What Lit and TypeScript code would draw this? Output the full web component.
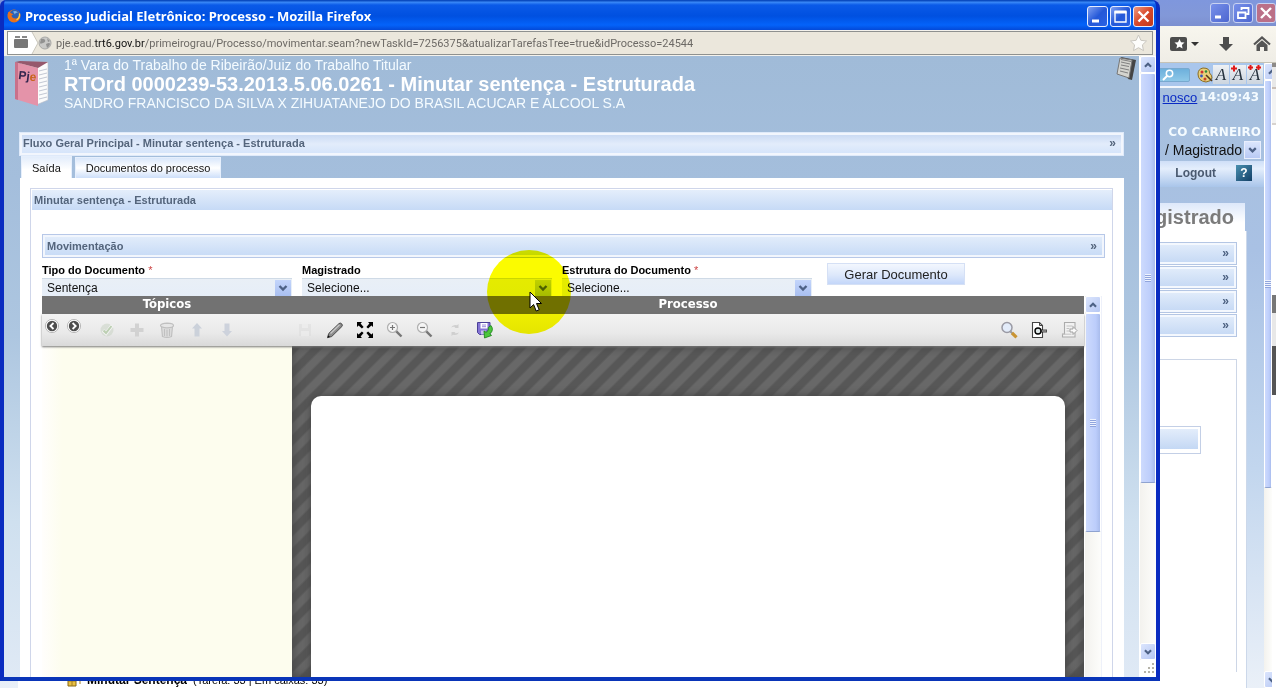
import { LitElement, html, css, svg, TemplateResult } from "lit";
import { customElement, property } from "lit/decorators.js";

const chevron = (dir: "up" | "down") => svg`
  <svg viewBox="0 0 16 16" width="16" height="16" aria-hidden="true">
    <path d=${dir === "down" ? "M4.5 6 L8 9.5 L11.5 6" : "M4.5 10 L8 6.5 L11.5 10"}
      fill="none" stroke="#4d6185" stroke-width="2.4" />
  </svg>`;

@customElement("xp-scrollbar")
class XpScrollbar extends LitElement {
  @property({ type: Boolean }) down = false;
  static styles = css`
    :host { display: flex; flex-direction: column; width: 16px; background: linear-gradient(90deg, #f3f2ee, #fdfdfb); overflow: hidden; }
    button { flex: none; width: 16px; height: 17px; padding: 0; border: 1px solid #fff; border-radius: 2px;
      background: linear-gradient(135deg, #dbe5fd, #b6c7f3); display: flex; align-items: center; justify-content: center; }
    .thumb { flex: none; height: var(--thumb, 50%); box-sizing: border-box; border: 1px solid #fff; border-bottom-color: #8fa3d0;
      border-radius: 2px; background: linear-gradient(90deg, #cddafd, #bccdfb 70%, #a9bcec);
      display: flex; align-items: center; justify-content: center; }
    .grip { width: 6px; height: 8px; background: repeating-linear-gradient(#eef3ff 0 1px, #91a5dd 1px 2px); }
    .gap { flex: 1; }
  `;
  render() {
    return html`
      <button aria-label="Rolar para cima">${chevron("up")}</button>
      <div class="thumb"><div class="grip"></div></div>
      <div class="gap"></div>
      ${this.down ? html`<button aria-label="Rolar para baixo">${chevron("down")}</button>` : ""}
    `;
  }
}

const icons: Record<string, TemplateResult> = {
  prev: svg`<circle cx="8" cy="7" r="6.6" fill="#fff" stroke="#aaa" stroke-width=".8"/><circle cx="8" cy="7" r="5.2" fill="#4e4e4e"/><path d="M9.5 4 L6.4 7 L9.5 10" fill="none" stroke="#fff" stroke-width="1.8"/>`,
  next: svg`<circle cx="8" cy="7" r="6.6" fill="#fff" stroke="#aaa" stroke-width=".8"/><circle cx="8" cy="7" r="5.2" fill="#4e4e4e"/><path d="M6.6 4 L9.7 7 L6.6 10" fill="none" stroke="#fff" stroke-width="1.8"/>`,
  check: svg`<g opacity=".45"><circle cx="9" cy="9" r="6.5" fill="#c3cfbd"/><path d="M5 9.5 L8 12.5 L14 4.5" fill="none" stroke="#fff" stroke-width="3.4"/><path d="M5.5 9.5 L8 12 L13.5 5" fill="none" stroke="#86b070" stroke-width="2"/></g>`,
  plus: svg`<path d="M7 2.5h4V7h4.5v4H11v4.5H7V11H2.5V7H7z" fill="#d2d2d2"/>`,
  trash: svg`<g fill="none" stroke="#c0c0c0" stroke-width="1.2"><path d="M3.5 5.5 L4.5 15.5 Q9 17.5 13.5 15.5 L14.5 5.5" fill="#dedede"/><ellipse cx="9" cy="4.5" rx="6.5" ry="2.3" fill="#e6e6e6"/><path d="M6.5 8v7M9 8.5v7M11.5 8v7M7 2.5h4"/></g>`,
  up: svg`<path d="M9 2 L14 7.5 H11.5 V15.5 H6.5 V7.5 H4 Z" fill="#cbd1da"/>`,
  down: svg`<path d="M6.5 2.5h5V10H14L9 15.5 4 10h2.5z" fill="#cdd2dc"/>`,
  save: svg`<g fill="#d9d9d9" opacity=".7"><path d="M3 3h12v12H3z" opacity=".6"/><path d="M6 3h6v4H6zM5 10h8v5H5z" fill="#ececec"/></g>`,
  pencil: svg`<path d="M1.5 16.7 L2.7 12.5 L13 2.6 Q14.2 1.4 15.7 2.8 Q17 4.2 15.9 5.5 L5.7 15.5 Z" fill="#8d8d8d" stroke="#4a4a4a" stroke-width="1"/><path d="M4.5 12.5 L13.5 3.8" stroke="#c8c8c8" stroke-width="1.4"/><path d="M1.5 16.7l.8-2.5 1.6 1.6z" fill="#111"/>`,
  expand: svg`<g fill="#000"><path d="M1 1h5L4.6 2.6 7.6 5.9 5.9 7.6 2.6 4.6 1 6zM17 1v5l-1.6-1.4-3.3 3-1.7-1.7 3-3.3L12 1zM1 17v-5l1.6 1.4 3.3-3 1.7 1.7-3 3.3L6 17zM17 17h-5l1.4-1.6-3-3.3 1.7-1.7 3.3 3L17 12z"/></g>`,
  zoomIn: svg`<circle cx="6.5" cy="6.5" r="5" fill="#f5f5f5" stroke="#b0b0b0" stroke-width="1.2"/><path d="M4 6.5h5M6.5 4v5" stroke="#777" stroke-width="1.2"/><path d="M10.3 10.3 L15.5 15.5" stroke="#777" stroke-width="2.4"/>`,
  zoomOut: svg`<circle cx="6.5" cy="6.5" r="5" fill="#f5f5f5" stroke="#b0b0b0" stroke-width="1.2"/><path d="M4 6.5h5" stroke="#777" stroke-width="1.2"/><path d="M10.3 10.3 L15.5 15.5" stroke="#777" stroke-width="2.4"/>`,
  refresh: svg`<g fill="#cfcfcf"><path d="M5 6.5 Q7 3 11 4.2 L12.5 3 V7 H8.5 L9.5 6 Q7.5 5.2 5 6.5zM13 11.5 Q11 15 7 13.8 L5.5 15 V11 H9.5 L8.5 12 Q10.5 12.8 13 11.5z"/></g>`,
  saveGo: svg`<path d="M1.5 1.5h12.5v12H3.5l-2-2z" fill="#8474d4" stroke="#4a3f98"/><path d="M4.5 2h7v5.5h-7z" fill="#fff"/><path d="M6 4h4M6 5.7h4" stroke="#7d6bd0" stroke-width=".8"/><path d="M5 9.5h5v4H5z" fill="#c9c2ef"/><path d="M15 4.5 Q18.3 9 14 12.7 L15.5 14.5 L8.5 17 L8 10 L10.3 11.3 Q13.3 9 12.3 6.5 Z" fill="#4cc63c" stroke="#167f14" stroke-width=".8"/>`,
  search: svg`<circle cx="7" cy="6.5" r="5" fill="#e3ecfa" stroke="#9a9aa4" stroke-width="1.5"/><path d="M10.5 10.5 L12.5 12.5" stroke="#999" stroke-width="2"/><path d="M12 12 L16.5 16.3" stroke="#c99433" stroke-width="3.2"/>`,
  docKey: svg`<path d="M2.5 1.5h7l3 3v12h-10z" fill="#fff" stroke="#444" stroke-width="1.1"/><path d="M9.5 1.5v3h3" fill="none" stroke="#444"/><circle cx="8" cy="10" r="3" fill="#dfe8e8" stroke="#000" stroke-width="1.4"/><path d="M11 10h6" stroke="#222" stroke-width="2.8"/><path d="M12 10h4.5" stroke="#ddd" stroke-width="1"/>`,
  export: svg`<path d="M4.5 1.5H15V16H2.5v-3h2z" fill="#f1f1f1" stroke="#ababab" stroke-width="1.1"/><path d="M6.5 5h6M6.5 7.5h3M6.5 10h3M2.5 13.2h9" stroke="#c2c2c2"/><path d="M10 8h3V5.5l4 4-4 4V11h-3z" fill="#fafafa" stroke="#999" stroke-width=".9"/>`,
};

const tool = (name: string, label: string, cls = "tool") => html`
  <button class=${cls} aria-label=${label}>
    <svg viewBox="0 0 18 18" width="18" height="18" aria-hidden="true">${icons[name]}</svg>
  </button>`;

/* Main browser window, partly covered by the popup. */
@customElement("back-window")
class BackWindow extends LitElement {
  static styles = css`
    :host { display: flex; flex-direction: column; position: absolute; inset: 0; overflow: hidden;
      background: #fff; font-family: "Liberation Sans", Arial, sans-serif; }
    .title { flex: none; height: 26px; background: linear-gradient(#7f97dd, #8298d8 60%, #7c90d0); display: flex; justify-content: flex-end; align-items: center; gap: 3px; }
    .title button { width: 20px; height: 20px; padding: 0; border: 1px solid #c9d2f2; border-radius: 3px; background: linear-gradient(135deg, #7790ea, #4d66d0); }
    .title button.close { background: #bb7088; }
    button svg { display: block; }
    .nav { flex: none; height: 36px; background: linear-gradient(#f8f6ee, #efede6); border-bottom: 1px solid #c5c2b6; display: flex; justify-content: flex-end; align-items: center; gap: 19px; padding-right: 5px; }
    .nav svg { flex: none; }
    .body { flex: 1; min-height: 0; display: flex; }
    .main { flex: 1; min-width: 0; display: flex; flex-direction: column; background: linear-gradient(#a6c0dc, #a9c1e4 30%, #c2d6ee 65%, #eaf0f8); }
    .access { flex: none; height: 25px; box-sizing: border-box; border-bottom: 2px solid #f2f6fc; background: #a9c6ec; display: flex; justify-content: flex-end; align-items: center; }
    .find { width: 60px; height: 14px; border: 1px solid #78a9cf; background: linear-gradient(#6db0dc, #8ec8e8); border-radius: 2px; margin-right: 7px; display: flex; align-items: center; justify-content: flex-end; padding-right: 15px; box-sizing: border-box; }
    .size { width: 16px; height: 19px; padding: 0; border: 0; background: linear-gradient(#eef1f4, #ccd5df); margin-right: 1px; display: grid; font: italic 17px/19px "Liberation Serif", serif; color: #26323e; text-align: center; }
    .size > * { grid-area: 1 / 1; }
    .line { flex: none; display: flex; justify-content: flex-end; align-items: center; height: 18px; gap: 2px; padding-right: 5px; font-size: 13px; }
    .line a { color: #0a2ac4; text-decoration: underline; }
    .line b { color: #f4fbff; font: bold 12px "DejaVu Sans", Verdana, sans-serif; }
    .user { margin-top: 17px; padding-right: 3px; }
    .role { flex: none; height: 18px; display: flex; justify-content: flex-end; padding-right: 3px; align-items: center; }
    select { appearance: none; border: 0; background: transparent; font: 14px "Liberation Sans", sans-serif; padding: 0; color: #111; width: 79px; }
    .arrow { width: 17px; height: 18px; background: linear-gradient(#dbe6fd, #b9caf5); border: 1px solid #e9effd; box-sizing: border-box; }
    .menu { flex: none; height: 26px; margin-top: 2px; box-sizing: border-box; padding-bottom: 3px; background: linear-gradient(#cfdff8, #e4eefc 30%, #a9c5ea); display: flex; align-items: center; justify-content: flex-end; padding-right: 12px; gap: 20px; }
    .menu a { font-weight: bold; font-size: 12px; color: #4a5a70; text-decoration: none; }
    .help { width: 16px; height: 16px; padding: 0; border: 0; background: linear-gradient(135deg, #4a90b0, #123f66); color: #fff; font: bold 12px/16px "Liberation Sans", sans-serif; }
    .tab { flex: none; align-self: flex-end; margin: 16px 19px 0 0; width: 110px; height: 28px; box-sizing: border-box; padding-right: 11px; background: linear-gradient(#dde8fa, #fff 70%); text-align: right; font: bold 20px/28px "Liberation Sans", sans-serif; color: #7b7b7b; white-space: nowrap; }
    .sheet { flex: 1; min-height: 0; margin: 0 17px 0 18px; background: #fff; border-right: 1px solid #ccd8ea; display: flex; flex-direction: column; padding-right: 9px; }
    .bars { padding-top: 11px; display: flex; flex-direction: column; gap: 1px; }
    .bar { height: 23px; box-sizing: border-box; border: 1px solid #b4c6e4; box-shadow: inset 0 0 0 2px #f4f8fe; background: linear-gradient(#e3edfb, #c4d8f4); text-align: right; font: bold 12px/20px "Liberation Sans", sans-serif; color: #4c6080; padding-right: 7px; }
    .box { flex: 1; margin-top: 22px; border: 1px solid #cdd6e6; border-bottom: 0; }
    .small { margin: 66px 35px 0 0; height: 28px; box-sizing: border-box; border: 1px solid #c3cfe6; padding: 2px 2px 4px 2px; display: grid; }
    .small div { background: linear-gradient(#e3edfb, #c4d8f4); }
    .tree { flex: none; height: 16px; display: flex; align-items: center; gap: 6px; padding-left: 49px; margin: 0 17px 0 18px; background: #fff; font-size: 11px; border-right: 1px solid #ccd8ea; }
    .tree b { font-size: 12px; }
    xp-scrollbar { width: 8px; --thumb: 408px; }
    .edge { flex: none; width: 4px; background: linear-gradient(#8d8a88 0 4px, #e8e8e8 4px 24px, #c9bfb8 24px 26px, #f3f3f3 26px 60px, #d7d3cf 60px 62px, #fff 62px 232px, #777 232px 250px, #e8e8e8 250px 283px, #555 283px 332px, #fff 332px); }
  `;
  render() {
    return html`
      <div class="title">
        <button aria-label="Minimizar"><svg viewBox="0 0 18 18"><path d="M4 13h6" stroke="#fff" stroke-width="3"/></svg></button>
        <button aria-label="Restaurar"><svg viewBox="0 0 18 18"><path d="M7.5 6V4h7v6h-2M4 8.5h7.5V14H4z" fill="none" stroke="#fff" stroke-width="1.8"/></svg></button>
        <button class="close" aria-label="Fechar"><svg viewBox="0 0 18 18"><path d="M4 4l10 10M14 4L4 14" stroke="#fff" stroke-width="2.4"/></svg></button>
      </div>
      <div class="nav">
        <svg width="30" height="16" viewBox="0 0 30 16"><rect x="1" y="1" width="17" height="14" rx="2" fill="#4d4d4d"/><path d="M10.5 3l1.5 3.2 3.5.4-2.6 2.4.7 3.5-3.1-1.8-3.1 1.8.7-3.5L5.5 6.6 9 6.2z" fill="#fff"/><path d="M22 6h8l-4 4z" fill="#333"/></svg>
        <svg width="16" height="16" viewBox="0 0 16 16"><path d="M5 1h6v7h4l-7 7-7-7h4z" fill="#4d4d4d"/></svg>
        <svg width="18" height="16" viewBox="0 0 18 16"><path d="M1 8.5l8-7 8 7" fill="none" stroke="#555" stroke-width="2.2"/><path d="M3.5 9L9 4.2 14.5 9v6H11v-4H7v4H3.5z" fill="#555"/></svg>
      </div>
      <div class="body">
        <div class="main">
          <div class="access">
            <div class="find"><svg width="12" height="12" viewBox="0 0 12 12"><circle cx="7.5" cy="4.5" r="3.2" fill="none" stroke="#fff" stroke-width="1.5"/><path d="M5 7L1 11" stroke="#fff" stroke-width="2"/></svg></div>
            <svg width="16" height="16" viewBox="0 0 16 16"><path d="M6 1Q13 1 12.5 6q2.5 2 2.5 5-1 3.5-6 4Q1 14 1 7q0-5 5-6z" fill="#e7cf7a" stroke="#8c6d23"/><circle cx="5" cy="5" r="1.5" fill="#c33"/><circle cx="9" cy="4.5" r="1.3" fill="#2a8a3a"/><circle cx="4.5" cy="9" r="1.4" fill="#3553c4"/><circle cx="8" cy="12" r="1.5" fill="#c7402a"/><path d="M9 8l6 6" stroke="#553a1a" stroke-width="1.6"/></svg>
            <button class="size"><span>A</span></button>
            <button class="size"><span>A</span><svg width="16" height="19" viewBox="0 0 16 19"><path d="M1 3.5h6M4 .5v6" stroke="#e01818" stroke-width="2"/></svg></button>
            <button class="size"><span>A</span><svg width="16" height="19" viewBox="0 0 16 19"><path d="M1 2.5h5M3.5 0v5M9 2.5h5M11.5 0v5" stroke="#e01818" stroke-width="2"/></svg></button>
          </div>
          <div class="line"><a href="#">nosco</a><b>14:09:43</b></div>
          <div class="line user"><b>CO CARNEIRO</b></div>
          <div class="role"><select aria-label="Perfil"><option>/ Magistrado</option></select><svg class="arrow" viewBox="0 0 16 16"><path d="M4.5 6L8 9.5 11.5 6" fill="none" stroke="#4d6185" stroke-width="2.4"/></svg></div>
          <div class="menu"><a href="#">Logout</a><button class="help">?</button></div>
          <div class="tab">gistrado</div>
          <div class="sheet">
            <div class="bars">${[0, 1, 2, 3].map(() => html`<div class="bar">»</div>`)}</div>
            <div class="box"><div class="small"><div></div></div></div>
          </div>
          <div class="tree">
            <svg width="14" height="16" viewBox="0 0 14 16"><path d="M1 5h8v9H1z" fill="#e9c044" stroke="#8a6a14"/><path d="M5 5v9M1 9h8M10 7h3v5" stroke="#a17f22" fill="none"/></svg>
            <b>Minutar Sentença</b><span>(Tarefa: 33 | Em caixas: 33)</span>
          </div>
        </div>
        <xp-scrollbar down></xp-scrollbar>
        <div class="edge"></div>
      </div>`;
  }
}

/* Document editor shown below the form. */
@customElement("doc-editor")
class DocEditor extends LitElement {
  static styles = css`
    :host { display: flex; min-height: 0; font-family: "Liberation Sans", Arial, sans-serif; }
    .editor { flex: 1; min-width: 0; display: flex; flex-direction: column; }
    .heads { flex: none; height: 18px; display: grid; grid-template-columns: 250px 1fr; background: #727272; color: #fff; text-align: center; font: bold 13px/16px "DejaVu Sans Condensed", "DejaVu Sans", sans-serif; }
    .bar { flex: none; height: 32px; display: flex; align-items: center; background: linear-gradient(#f3f3f3, #e9e9e9 60%, #d9d9d9); position: relative; box-shadow: 0 1px 2px #777; }
    .tool, .nav { flex: none; width: 30px; height: 30px; padding: 0; border: 0; background: none; display: flex; align-items: center; justify-content: center; }
    .nav { width: 22px; height: 28px; }
    .group { display: flex; }
    .group.a { align-self: flex-start; }
    .group.b { margin-left: 6px; }
    .group.c { margin-left: 48px; }
    .group.d { margin-left: auto; }
    .work { flex: 1; min-height: 0; display: grid; grid-template-columns: 250px 1fr; }
    .topics { background: linear-gradient(90deg, #fffefc, #fdfdee 20px); }
    .canvas { min-height: 0; display: flex; padding: 50px 19px 0;
      background: repeating-linear-gradient(135deg, #575757 0 6px, #686868 8px 14px, #575757 16px);
      box-shadow: inset 0 0 12px #444; }
    .page { flex: 1; background: #fff; border-radius: 10px 10px 0 0; box-shadow: 0 0 8px #444; }
    xp-scrollbar { margin-left: 1px; --thumb: 219px; border-right: 1px solid #eef1fa; }
  `;
  render() {
    return html`
      <div class="editor">
        <div class="heads"><span>Tópicos</span><span>Processo</span></div>
        <div class="bar">
          <div class="group a">${tool("prev", "Anterior", "nav")}${tool("next", "Próximo", "nav")}</div>
          <div class="group b">${tool("check", "Validar")}${tool("plus", "Adicionar")}${tool("trash", "Excluir")}${tool("up", "Subir")}${tool("down", "Descer")}</div>
          <div class="group c">${tool("save", "Salvar")}${tool("pencil", "Editar")}${tool("expand", "Tela cheia")}${tool("zoomIn", "Aumentar")}${tool("zoomOut", "Diminuir")}${tool("refresh", "Atualizar")}${tool("saveGo", "Salvar e continuar")}</div>
          <div class="group d">${tool("search", "Pesquisar")}${tool("docKey", "Visualizar")}${tool("export", "Exportar")}</div>
        </div>
        <div class="work"><div class="topics"></div><div class="canvas"><div class="page"></div></div></div>
      </div>
      <xp-scrollbar></xp-scrollbar>`;
  }
}

@customElement("popup-window")
class PopupWindow extends LitElement {
  static styles = css`
    :host { position: absolute; inset: 0 116px 7px 0; display: flex; flex-direction: column; box-sizing: border-box;
      border: 4px solid #0b3fd0; border-top: 0; border-color: #0b3fd0 #0a2cc0 #0a35b8; border-radius: 6px 8px 0 0; overflow: hidden;
      background: #0b50e8; font-family: "Liberation Sans", Arial, sans-serif; font-size: 11px; }
    .title { flex: none; height: 30px; margin: 0 -4px; padding: 2px 6px 0 7px; box-sizing: border-box; display: flex; align-items: center; gap: 4px;
      background: linear-gradient(#0a4bc0 0 1px, #3d8cf8 2px, #0a5ae8 5px, #0050e0 16px, #0463fa 25px, #0349d8); color: #fff; }
    h1 { flex: 1; margin: 0; font: bold 13px "Noto Sans", "Open Sans", sans-serif; }
    .win { display: flex; gap: 2px; }
    .win button { width: 21px; height: 21px; padding: 0; border: 1px solid #e6edff; border-radius: 3px; background: linear-gradient(135deg, #7fa0f2, #2458d8 50%, #2a62e4); }
    .win .close { background: linear-gradient(135deg, #ee9a80, #d8482a 50%, #c03a1c); }
    button svg { display: block; }
    .url { flex: none; height: 26px; box-sizing: border-box; padding: 1px 3px 0; background: #f4f2ec; display: flex; }
    .box { flex: 1; margin-bottom: 1px; border: 1px solid #8f918f; background: #ebe7dc; display: flex; align-items: center; }
    .ident { width: 30px; align-self: stretch; }
    .ident svg { display: block; }
    .addr { flex: 1; font: 11px "Roboto", "Liberation Sans", sans-serif; color: #6d6a66; margin-left: 4px; white-space: nowrap; }
    .addr b { font-weight: normal; color: #111; }
    .view { flex: 1; min-height: 0; display: flex; }
    .page { flex: 1; min-width: 0; display: flex; flex-direction: column; background: linear-gradient(#a0bbd8 0, #a4bedc 20%, #adc6e0 45%, #cfe0ef 75%, #dfe9f5); }
    .side { display: flex; flex-direction: column; background: #fff; }
    .side xp-scrollbar { flex: 1; --thumb: 410px; margin-left: 1px; }
    .corner { height: 17px; }
    .corner svg { display: block; margin-left: 5px; }
    .head { flex: none; height: 76px; display: flex; padding: 0 3px 0 10px; }
    .book { margin: 5px 14px 0 0; }
    .info { flex: 1; color: #f4fbff; font-size: 14px; line-height: 18px; white-space: nowrap; }
    .info p { margin: 0; }
    .info h2 { margin: 0; font-size: 20px; line-height: 20px; color: #fff; }
    .bar { box-sizing: border-box; display: flex; justify-content: space-between; align-items: center; height: 24px; padding: 0 7px 0 4px;
      border: 1px solid #b7c8e8; box-shadow: inset 0 0 0 2px #f2f6fd; background: linear-gradient(#e4eefb, #c6daf6); color: #54657c; font-weight: bold; font-size: 11px; line-height: 14px; }
    .bar.outer { margin: 0 15px; padding: 0 7px 2px 3px; border-color: #dfeafa; flex: none; background: linear-gradient(#c6d7f2, #e2ecfb 50%, #d3e3fa); }
    .more { font-size: 12px; }
    .tabs { flex: none; height: 22px; margin: 0 16px; padding: 0 1px; display: flex; gap: 3px; align-items: flex-end; }
    .tabs button { height: 21px; border: 1px solid #e6effc; border-bottom: 0; padding: 0 10px; background: linear-gradient(#d9e7fb, #fff 50%, #cddffa); font: 11px "Liberation Sans", sans-serif; color: #111; }
    .tabs .on { background: linear-gradient(#e3edfb, #fff 60%); height: 22px; }
    .sheet { flex: 1; min-height: 0; margin: 0 15px 0 16px; background: #fff; padding: 10px 11px 0 10px; display: flex; }
    .panel { flex: 1; min-width: 0; border: 1px solid #cfd6ea; border-bottom: 0; display: flex; flex-direction: column; }
    .panel > .bar { height: 21px; padding-left: 2px; border: 0; border-top: 1px solid #fff; flex: none; margin-left: 1px; box-shadow: none; }
    .inner { flex: 1; min-height: 0; margin: 24px 7px 0 11px; display: flex; flex-direction: column; }
    .form { flex: none; display: flex; height: 38px; gap: 10px; }
    .field { width: 250px; display: flex; flex-direction: column; }
    label { font-weight: bold; font-size: 11px; line-height: 14px; padding: 5px 0 1px; color: #000; white-space: nowrap; }
    label i { color: #c44; font-style: normal; font-weight: normal; }
    .sel { height: 18px; display: flex; align-items: center; background: linear-gradient(#e9eff6, #e6eef8); border-top: 1px solid #cfdae6; box-sizing: border-box; padding-right: 1px; }
    select { flex: 1; min-width: 0; appearance: none; border: 0; background: none; padding: 0 5px; font: 12px "Liberation Sans", sans-serif; color: #111; }
    .sel svg { background: linear-gradient(#c3d5fb, #a9bff0); }
    .form > button { margin: 5px 0 0 5px; width: 138px; height: 22px; padding: 0; border: 1px solid #d5e0f5; background: linear-gradient(#f3f7fe, #dde8fb 55%, #c3d6f9); font: 13px "Liberation Sans", sans-serif; color: #222; }
    doc-editor { flex: 1; margin-right: 3px; }
  `;
  field(id: string, label: string, value: string, req: boolean) {
    return html`<div class="field">
      <label for=${id}>${label}${req ? html` <i>*</i>` : ""}</label>
      <div class="sel"><select id=${id}><option>${value}</option></select>${chevron("down")}</div>
    </div>`;
  }
  render() {
    return html`
      <div class="title">
        <svg width="14" height="14" viewBox="0 0 14 14"><circle cx="7" cy="7" r="6.5" fill="#e8761c"/><circle cx="7.5" cy="5.5" r="4.8" fill="#2b62b8"/><path d="M6 2.5q3-1.5 5 1-3 0-3 2z" fill="#7fb4e8"/><path d="M1 3Q0 9 5 12q5 2 8-3 0-3-.5-4Q12 9.5 8.5 9.5 5 9.5 4.5 6.5q1-1 2-1Q4 3.5 1 3z" fill="#e8701c"/><path d="M12.5 4.5Q13 9 9.5 11" fill="none" stroke="#fbd14b" stroke-width="1.3"/></svg>
        <h1>Processo Judicial Eletrônico: Processo - Mozilla Firefox</h1>
        <div class="win">
          <button aria-label="Minimizar"><svg viewBox="0 0 19 19"><path d="M4 14h7" stroke="#fff" stroke-width="3"/></svg></button>
          <button aria-label="Maximizar"><svg viewBox="0 0 19 19"><path d="M4 5h11v10H4z" fill="none" stroke="#fff" stroke-width="1.4"/><path d="M3.5 5h12" stroke="#fff" stroke-width="3"/></svg></button>
          <button class="close" aria-label="Fechar"><svg viewBox="0 0 19 19"><path d="M4.5 4.5l10 10M14.5 4.5l-10 10" stroke="#fff" stroke-width="2.4"/></svg></button>
        </div>
      </div>
      <div class="url">
        <div class="box">
          <div class="ident"><svg width="30" height="22" viewBox="0 0 30 22"><path d="M0 0h24l6 11-6 11H0z" fill="#fff"/><path d="M24 0l6 11-6 11" fill="none" stroke="#c9c6bc"/><rect x="6" y="7" width="14" height="9" rx="1" fill="#777"/><path d="M7 4h5v2H7zM14 4h5v2h-5z" fill="#888"/></svg></div>
          <svg width="14" height="14" viewBox="0 0 14 14"><circle cx="7" cy="7" r="6" fill="#c9c9c7" stroke="#a8a8a6"/><path d="M3 3q3-1 4 1t-2 3-3 0zM8 8q4-2 4 0t-3 4zM9 2l3 3-2 1z" fill="#919190"/></svg>
          <span class="addr">pje.ead.<b>trt6.gov.br</b>/primeirograu/Processo/movimentar.seam?newTaskId=7256375&amp;atualizarTarefasTree=true&amp;idProcesso=24544</span>
          <svg width="26" height="20" viewBox="0 0 26 20"><path d="M12.5 2l2.4 5.3 5.6.7-4.1 3.9 1.1 5.7-5-2.9-5 2.9 1.1-5.7L4.5 8l5.6-.7z" fill="#fdfdfb" stroke="#c9c6bf"/></svg>
        </div>
      </div>
      <div class="view">
        <div class="page">
          <div class="head">
            <svg class="book" width="36" height="46" viewBox="0 0 36 46"><path d="M6 1h28v38L22 44z" fill="#fbfbfb" stroke="#b9bcc6" stroke-width=".6"/><path d="M1 1l23 6v38L1 38z" fill="#e493a9"/><path d="M1 1l3 1v37l-3-1z" fill="#c9708a"/><path d="M1 1l5-1 28 1-10 6z" fill="#96586c"/><path d="M25 10l8-2M25 14l8-2M25 18l8-2M25 22l8-2M25 26l8-2M25 30l8-2M25 34l8-2M25 38l8-2" stroke="#c3c8d4"/><text x="4" y="18" font-family="Liberation Sans" font-size="12" font-weight="bold" fill="#33264e" transform="rotate(7 4 18)">Pj<tspan fill="#c8641c">e</tspan></text></svg>
            <div class="info">
              <p>1ª Vara do Trabalho de Ribeirão/Juiz do Trabalho Titular</p>
              <h2>RTOrd 0000239-53.2013.5.06.0261 - Minutar sentença - Estruturada</h2>
              <p>SANDRO FRANCISCO DA SILVA X ZIHUATANEJO DO BRASIL ACUCAR E ALCOOL S.A</p>
            </div>
            <svg width="20" height="25" viewBox="0 0 20 25"><path d="M5 1l15 3-4 20-4-1z" fill="#444"/><path d="M4 2l12 2-3 18-12-4z" fill="#d4d4cf" stroke="#777"/><path d="M5 6l9 2M5 9l8 1.5M4 12l9 2M4 15l8 2M5 3.5l10 2" stroke="#808080"/></svg>
          </div>
          <div class="bar outer"><span>Fluxo Geral Principal - Minutar sentença - Estruturada</span><span class="more">»</span></div>
          <div class="tabs"><button class="on">Saída</button><button>Documentos do processo</button></div>
          <div class="sheet">
            <div class="panel">
              <div class="bar"><span>Minutar sentença - Estruturada</span></div>
              <div class="inner">
                <div class="bar"><span>Movimentação</span><span class="more">»</span></div>
                <div class="form">
                  ${this.field("tipo", "Tipo do Documento", "Sentença", true)}
                  ${this.field("mag", "Magistrado", "Selecione...", false)}
                  ${this.field("estr", "Estrutura do Documento", "Selecione...", true)}
                  <button>Gerar Documento</button>
                </div>
                <doc-editor></doc-editor>
              </div>
            </div>
          </div>
        </div>
        <div class="side">
          <xp-scrollbar down></xp-scrollbar>
          <div class="corner"><svg width="12" height="15" viewBox="0 0 12 15"><path d="M8 3h2v2H8zM8 7h2v2H8zM4 7h2v2H4zM8 11h2v2H8zM4 11h2v2H4zM0 11h2v2H0z" fill="#b5b3a8"/></svg></div>
        </div>
      </div>`;
  }
}

@customElement("app-root")
class AppRoot extends LitElement {
  static styles = css`
    :host { display: block; position: relative; height: 100vh; overflow: hidden; isolation: isolate; }
    .halo { position: absolute; left: 487px; top: 250px; width: 84px; height: 84px; border-radius: 50%; background: #fbfb00; mix-blend-mode: multiply; pointer-events: none; }
    .cursor { position: absolute; left: 529px; top: 291px; pointer-events: none; }
  `;
  render() {
    return html`
      <back-window></back-window>
      <popup-window></popup-window>
      <div class="halo"></div>
      <svg class="cursor" width="14" height="22" viewBox="0 0 14 22"><path d="M1 1v16l3.6-3.5L7.2 20l3-1.3L7.5 12.5H12.5z" fill="#fff" stroke="#000"/></svg>`;
  }
}
